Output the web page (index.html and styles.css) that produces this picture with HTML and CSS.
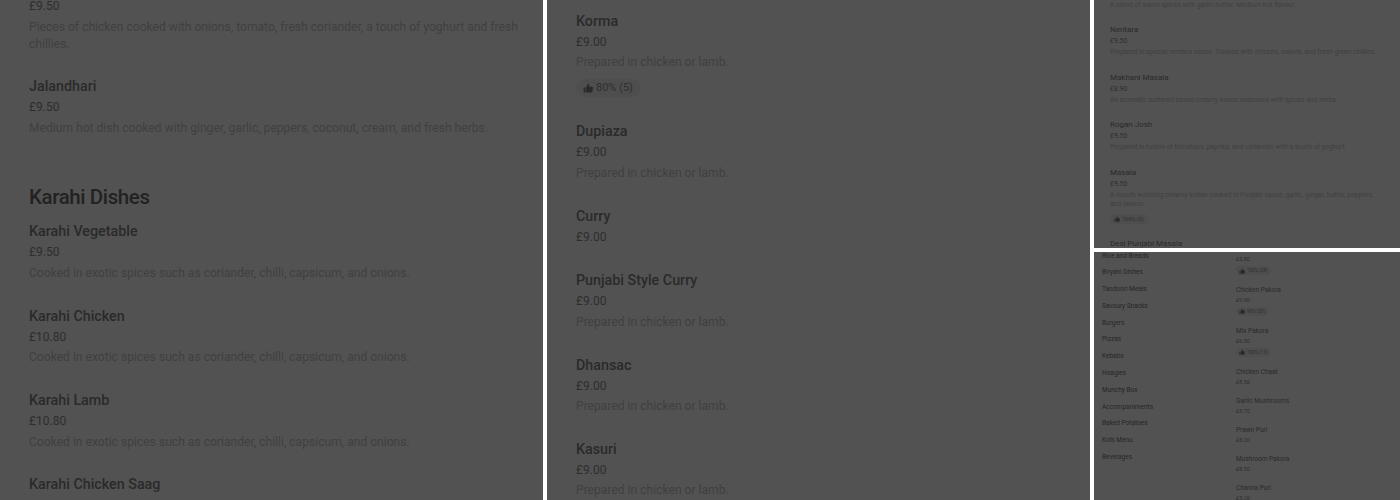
FILE: index.html
```html
<!DOCTYPE html>
<html>

<head>
    <meta charset="utf-8" />
    <title>Menu</title>
    <link rel="stylesheet" href="styles.css">
</head>

<body>
    <div class="global-container">
        <div class="panel panel-left">
            <div class="list list-left">
                <div class="item">
                    <div class="price">£9.50</div>
                    <div class="desc">Pieces of chicken cooked with onions, tomato, fresh coriander, a touch of yoghurt and fresh chillies.</div>
                </div>
                <div class="item">
                    <div class="name">Jalandhari</div>
                    <div class="price">£9.50</div>
                    <div class="desc">Medium hot dish cooked with ginger, garlic, peppers, coconut, cream, and fresh herbs.</div>
                </div>
                <h2>Karahi Dishes</h2>
                <div class="item">
                    <div class="name">Karahi Vegetable</div>
                    <div class="price">£9.50</div>
                    <div class="desc">Cooked in exotic spices such as coriander, chilli, capsicum, and onions.</div>
                </div>
                <div class="item">
                    <div class="name">Karahi Chicken</div>
                    <div class="price">£10.80</div>
                    <div class="desc">Cooked in exotic spices such as coriander, chilli, capsicum, and onions.</div>
                </div>
                <div class="item">
                    <div class="name">Karahi Lamb</div>
                    <div class="price">£10.80</div>
                    <div class="desc">Cooked in exotic spices such as coriander, chilli, capsicum, and onions.</div>
                </div>
                <div class="item">
                    <div class="name">Karahi Chicken Saag</div>
                </div>
            </div>
        </div>

        <div class="panel panel-middle">
            <div class="list list-middle">
                <div class="item">
                    <div class="name">Korma</div>
                    <div class="price">£9.00</div>
                    <div class="desc">Prepared in chicken or lamb.</div>
                    <div class="badge"><svg viewBox="0 0 16 16"><path d="M1 7h3v8H1zM5 7l3-6c1.400 0 2 1 2 2.200V6h4.600c.8 0 1.400.7 1.300 1.500l-1 6.300c-.1.700-.7 1.200-1.400 1.200H5z"/></svg>80% (5)</div>
                </div>
                <div class="item">
                    <div class="name">Dupiaza</div>
                    <div class="price">£9.00</div>
                    <div class="desc">Prepared in chicken or lamb.</div>
                </div>
                <div class="item">
                    <div class="name">Curry</div>
                    <div class="price">£9.00</div>
                </div>
                <div class="item">
                    <div class="name">Punjabi Style Curry</div>
                    <div class="price">£9.00</div>
                    <div class="desc">Prepared in chicken or lamb.</div>
                </div>
                <div class="item">
                    <div class="name">Dhansac</div>
                    <div class="price">£9.00</div>
                    <div class="desc">Prepared in chicken or lamb.</div>
                </div>
                <div class="item">
                    <div class="name">Kasuri</div>
                    <div class="price">£9.00</div>
                    <div class="desc">Prepared in chicken or lamb.</div>
                </div>
            </div>
        </div>

        <div class="side">
            <div class="panel panel-top">
                <div class="list list-top small">
                    <div class="item">
                        <div class="desc">A blend of warm spices with garlic butter. Medium hot flavour.</div>
                    </div>
                    <div class="item">
                        <div class="name">Nentara</div>
                        <div class="price">£9.50</div>
                        <div class="desc">Prepared in special nentara sauce. Cooked with chicken, onions, and fresh green chillies.</div>
                    </div>
                    <div class="item">
                        <div class="name">Makhani Masala</div>
                        <div class="price">£8.90</div>
                        <div class="desc">An aromatic buttered based creamy sauce seasoned with spices and herbs.</div>
                    </div>
                    <div class="item">
                        <div class="name">Rogan Josh</div>
                        <div class="price">£9.50</div>
                        <div class="desc">Prepared in fusion of tomatoes, paprika, and coriander with a touch of yoghurt.</div>
                    </div>
                    <div class="item">
                        <div class="name">Masala</div>
                        <div class="price">£9.50</div>
                        <div class="desc">A mouth watering creamy indian cooked in Punjabi sauce, garlic, ginger, butter, peppers, and onions.</div>
                        <div class="badge"><svg viewBox="0 0 16 16"><path d="M1 7h3v8H1zM5 7l3-6c1.400 0 2 1 2 2.200V6h4.600c.8 0 1.400.7 1.300 1.500l-1 6.300c-.1.700-.7 1.200-1.400 1.200H5z"/></svg>100% (3)</div>
                    </div>
                    <div class="item">
                        <div class="name">Desi Punjabi Masala</div>
                    </div>
                </div>
            </div>

            <div class="panel panel-bottom">
                <div class="browse">
                    <ul class="cats">
                        <li>Rice and Breads</li>
                        <li>Biryani Dishes</li>
                        <li>Tandoori Meals</li>
                        <li>Savoury Snacks</li>
                        <li>Burgers</li>
                        <li>Pizzas</li>
                        <li>Kebabs</li>
                        <li>Hoagies</li>
                        <li>Munchy Box</li>
                        <li>Accompaniments</li>
                        <li>Baked Potatoes</li>
                        <li>Kids Menu</li>
                        <li>Beverages</li>
                    </ul>
                    <div class="list list-snacks tiny">
                        <div class="item">
                            <div class="price">£5.80</div>
                            <div class="badge"><svg viewBox="0 0 16 16"><path d="M1 7h3v8H1zM5 7l3-6c1.400 0 2 1 2 2.200V6h4.600c.8 0 1.400.7 1.300 1.500l-1 6.300c-.1.700-.7 1.200-1.400 1.200H5z"/></svg>100% (38)</div>
                        </div>
                        <div class="item">
                            <div class="name">Chicken Pakora</div>
                            <div class="price">£9.00</div>
                            <div class="badge"><svg viewBox="0 0 16 16"><path d="M1 7h3v8H1zM5 7l3-6c1.400 0 2 1 2 2.200V6h4.600c.8 0 1.400.7 1.300 1.500l-1 6.300c-.1.700-.7 1.200-1.400 1.200H5z"/></svg>90% (30)</div>
                        </div>
                        <div class="item">
                            <div class="name">Mix Pakora</div>
                            <div class="price">£6.00</div>
                            <div class="badge"><svg viewBox="0 0 16 16"><path d="M1 7h3v8H1zM5 7l3-6c1.400 0 2 1 2 2.200V6h4.600c.8 0 1.400.7 1.300 1.500l-1 6.300c-.1.700-.7 1.200-1.400 1.200H5z"/></svg>100% (13)</div>
                        </div>
                        <div class="item">
                            <div class="name">Chicken Chaat</div>
                            <div class="price">£8.50</div>
                        </div>
                        <div class="item">
                            <div class="name">Garlic Mushrooms</div>
                            <div class="price">£5.70</div>
                        </div>
                        <div class="item">
                            <div class="name">Prawn Puri</div>
                            <div class="price">£8.20</div>
                        </div>
                        <div class="item">
                            <div class="name">Mushroom Pakora</div>
                            <div class="price">£8.50</div>
                        </div>
                        <div class="item">
                            <div class="name">Channa Puri</div>
                            <div class="price">£5.20</div>
                        </div>
                    </div>
                </div>
            </div>
        </div>
    </div>
</body>

</html>
```

FILE: styles.css
```css
* {
    box-sizing: border-box;
}

html,
body {
    font-family: Roboto, 'Noto Sans', sans-serif;
    margin: 0;
    padding: 0;
    background: #fff;
    overflow: hidden;
}

.global-container {
    display: grid;
    grid-template-columns: 543px 543px 306px;
    gap: 4px;
    height: 500px;
}

.panel {
    background: #525252;
    overflow: hidden;
    min-height: 0;
}

.side {
    display: grid;
    grid-template-rows: 248px 248px;
    gap: 4px;
}

/* menu items */
.item {
    padding-bottom: 23.400px;
}

.name {
    font-size: 14.300px;
    font-weight: 500;
    line-height: 21px;
    color: #2a2a2a;
}

.price {
    font-size: 12px;
    line-height: 20px;
    color: #2e2e2e;
}

.desc {
    font-size: 12.100px;
    line-height: 17px;
    color: #404040;
    margin: 2.500px 0 0.500px;
}

h2 {
    font-size: 20.500px;
    font-weight: 500;
    letter-spacing: -0.400px;
    line-height: 28px;
    color: #222;
    margin: 22px 0 10.500px;
}

.badge {
    display: flex;
    width: max-content;
    align-items: center;
    gap: 3px;
    font-size: 11px;
    color: #2e2e2e;
    background: #4e4e4e;
    border-radius: 9px;
    padding: 0 7px;
    height: 18px;
    margin: 7.500px 0 1.500px;
}

.badge svg {
    width: 10px;
    height: 10px;
    fill: #2a2a2a;
}

.list-left {
    margin-top: -4px;
    padding: 0 24px 0 29px;
}

.list-middle {
    padding: 10.500px 24px 0 29px;
}

/* right hand shots are the same page, further zoomed out */
.small .item {
    padding-bottom: 12.700px;
}

.small .name {
    font-size: 8px;
    font-weight: 400;
    line-height: 11.900px;
    margin-bottom: 0.300px;
}

.small .price {
    font-size: 6.800px;
    line-height: 11.300px;
}

.small .desc {
    font-size: 6.800px;
    line-height: 9.600px;
    margin: 0.850px 0;
}

.list-top {
    margin-top: 1px;
    padding: 0 16px;
}

.small .badge {
    font-size: 5.500px;
    height: 10px;
    padding: 0 4px;
    gap: 2px;
    margin: 3.700px 0 1.500px;
}

.small .badge svg,
.tiny .badge svg {
    width: 6px;
    height: 6px;
}

.browse {
    display: grid;
    grid-template-columns: 134px 1fr;
    padding-left: 8px;
    margin-top: -4.500px;
}

.cats {
    list-style: none;
    margin: 0;
    padding: 0;
}

.cats li {
    font-size: 6.500px;
    line-height: 16.800px;
    color: #262626;
}

.list-snacks {
    margin-top: 6.500px;
}

.tiny .item {
    padding-bottom: 9.900px;
}

.tiny .name {
    font-size: 6.500px;
    font-weight: 400;
    line-height: 9px;
    margin: 0;
}

.tiny .price {
    font-size: 5.500px;
    line-height: 10px;
}

.tiny .badge {
    font-size: 4.600px;
    height: 9px;
    padding: 0 3px;
    gap: 2px;
    margin: 2px 0 1.100px;
}
```
